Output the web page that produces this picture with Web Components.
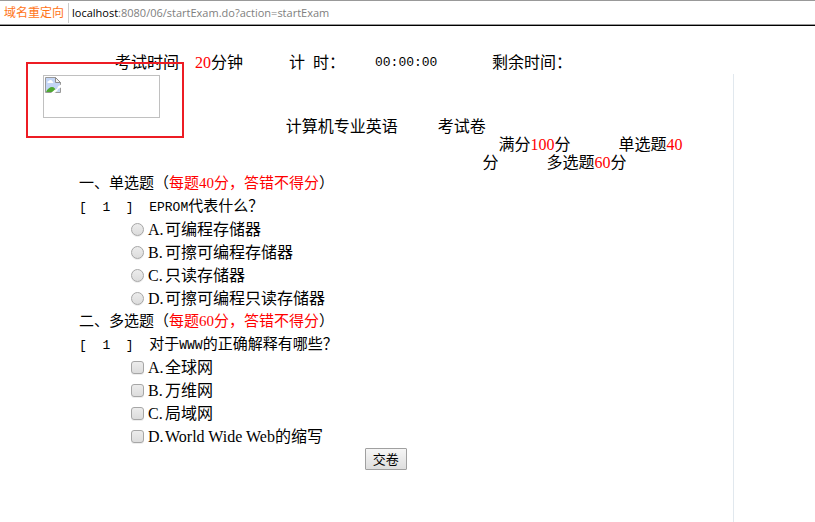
<!DOCTYPE html>
<html lang="zh-CN">
<head>
  <meta charset="utf-8">
  <meta name="viewport" content="width=device-width, initial-scale=1">
  <title>计算机专业英语 考试卷</title>
  <style>
    body {
      margin: 0;
      background: #fff;
      color: #000;
      font: 16px/18px "Liberation Serif", "Noto Sans CJK SC", serif;
      --red: #f00;
      --mono: "Liberation Mono", "Noto Sans CJK SC", monospace;
    }
  </style>
</head>
<body>
  <exam-page>
    <address-bar slot="bar" label="域名重定向" host="localhost" path=":8080/06/startExam.do?action=startExam"></address-bar>
    <exam-timer slot="timer" minutes="20" elapsed="00:00:00"></exam-timer>
    <exam-logo></exam-logo>
    <exam-header subject="计算机专业英语" total="100" single="40" multiple="60"></exam-header>
    <exam-form>
      <exam-section heading="一、单选题" note="每题40分，答错不得分">
        <exam-question number="1" type="radio" options="可编程存储器|可擦可编程存储器|只读存储器|可擦可编程只读存储器"><code>EPROM</code>代表什么？</exam-question>
      </exam-section>
      <exam-section heading="二、多选题" note="每题60分，答错不得分">
        <exam-question number="1" type="checkbox" options="全球网|万维网|局域网|World Wide Web的缩写">对于<code>WWW</code>的正确解释有哪些？</exam-question>
      </exam-section>
    </exam-form>
  </exam-page>

  <script>
    class ExamPage extends HTMLElement {
      constructor() {
        super();
        this.attachShadow({ mode: 'open' });
        this.shadowRoot.innerHTML = `
          <style>
            :host {
              display: flex;
              flex-direction: column;
              min-height: 100vh;
            }
            main {
              flex: 1;
              box-sizing: border-box;
              margin: 2px 10% 0 0;
              padding-top: 1px;
              border-right: 1px solid #e1e8ee;
            }
          </style>
          <slot name="bar"></slot>
          <slot name="timer"></slot>
          <main><slot></slot></main>
        `;
      }
    }

    class AddressBar extends HTMLElement {
      constructor() {
        super();
        this.attachShadow({ mode: 'open' });
        this.shadowRoot.innerHTML = `
          <style>
            :host {
              display: flex;
              align-items: center;
              height: 23px;
              border-top: 1px solid #999;
              border-bottom: 1px solid #999;
              box-shadow: 0 1px 0 #000;
              font: 12px/20px "Open Sans", "Noto Sans CJK SC", sans-serif;
              white-space: nowrap;
            }
            .label {
              padding: 0 4px;
              border-right: 1px solid #ccc;
              color: #ff7519;
            }
            .url {
              padding-left: 3px;
              font-size: 11px;
              color: #808080;
            }
            b {
              font-weight: normal;
              color: #000;
            }
          </style>
          <span class="label">${this.getAttribute('label')}</span>
          <span class="url"><b>${this.getAttribute('host')}</b>${this.getAttribute('path')}</span>
        `;
      }
    }

    class ExamTimer extends HTMLElement {
      constructor() {
        super();
        this.attachShadow({ mode: 'open' });
        this.shadowRoot.innerHTML = `
          <style>
            :host {
              display: grid;
              grid-template-columns: 174px 86px 117px auto;
              padding: 29px 0 0 115px;
              white-space: nowrap;
            }
            .red {
              margin-left: 16px;
              color: var(--red);
            }
            time {
              font-family: var(--mono);
              font-size: 13px;
            }
          </style>
          <span>考试时间<span class="red">${this.getAttribute('minutes')}</span>分钟</span>
          <span>计&ensp;时：</span>
          <time>${this.getAttribute('elapsed')}</time>
          <span>剩余时间：</span>
        `;
      }
    }

    class ExamLogo extends HTMLElement {
      constructor() {
        super();
        this.attachShadow({ mode: 'open' });
        this.shadowRoot.innerHTML = `
          <style>
            :host {
              display: block;
              position: relative;
              box-sizing: border-box;
              width: 117px;
              height: 43px;
              margin-left: 43px;
              padding: 1px;
              border: 1px solid #c0c0c0;
            }
            /* highlight frame drawn over the logo and the timer row */
            :host::after {
              content: "";
              position: absolute;
              inset: -14px -25px -21px -18px;
              border: 2px solid #ed1c24;
            }
            svg {
              display: block;
            }
          </style>
          <svg width="16" height="16" viewBox="0 0 16 16" aria-hidden="true">
            <path d="M.5.5h10l5 5v10H.5z" fill="#fff"/>
            <path d="M1 1h10v5h4v9H1z" fill="#c3d5f5"/>
            <path d="M2.500 6a1.500 1.500 0 0 1 1.300-2 2 2 0 0 1 3.700.5A1.300 1.300 0 0 1 8.300 6z" fill="#fff"/>
            <path d="M1 15c1-3 4-5 6-5s4 2 5 5z" fill="#4fa832"/>
            <path d="M.5 15.500V.5h10l5 5v10z" fill="none" stroke="#999"/>
            <path d="M10.500.5v5h5z" fill="#f2f2f2" stroke="#8c8c8c"/>
            <path d="M6 16l4-3.500 2-.5 1-2.500 3-2v3l-3 1.500-1 2.500L9.500 16z" fill="#fff"/>
          </svg>
        `;
      }
    }

    class ExamHeader extends HTMLElement {
      constructor() {
        super();
        this.attachShadow({ mode: 'open' });
        this.shadowRoot.innerHTML = `
          <style>
            :host {
              display: block;
              padding: 0 40px 0 79px;
            }
            h1 {
              display: flex;
              justify-content: center;
              gap: 40px;
              margin: 0;
              font: inherit;
            }
            p {
              width: 210px;
              margin: 0 0 0 auto;
              text-indent: 16px;
            }
            .red {
              color: var(--red);
            }
          </style>
          <h1><span>${this.getAttribute('subject')}</span><span>考试卷</span></h1>
          <p>满分<span class="red">${this.getAttribute('total')}</span>分&emsp;&emsp;&emsp;单选题<span class="red">${this.getAttribute('single')}</span>分&emsp;&emsp;&emsp;多选题<span class="red">${this.getAttribute('multiple')}</span>分</p>
        `;
      }
    }

    class ExamForm extends HTMLElement {
      constructor() {
        super();
        this.attachShadow({ mode: 'open' });
        this.shadowRoot.innerHTML = `
          <style>
            :host {
              display: block;
              padding: 0 40px 0 79px;
            }
            button {
              display: block;
              margin: 0 auto;
              padding: 0 7px;
              height: 22px;
              border: 1px solid #a0a0a0;
              border-radius: 1px;
              background: linear-gradient(#f6f6f6, #dedede);
              color: #000;
              font: 13px/20px "Noto Sans CJK SC", sans-serif;
            }
          </style>
          <form>
            <slot></slot>
            <button type="button">交卷</button>
          </form>
        `;
      }
    }

    class ExamSection extends HTMLElement {
      constructor() {
        super();
        this.attachShadow({ mode: 'open' });
        this.shadowRoot.innerHTML = `
          <style>
            :host {
              display: block;
            }
            h2 {
              margin: 0;
              font: inherit;
              font-size: 15px;
              line-height: 23px;
            }
            .red {
              color: var(--red);
            }
          </style>
          <h2>${this.getAttribute('heading')}（<span class="red">${this.getAttribute('note')}</span>）</h2>
          <slot></slot>
        `;
      }
    }

    class ExamQuestion extends HTMLElement {
      constructor() {
        super();
        this.attachShadow({ mode: 'open' });
        const type = this.getAttribute('type');
        const options = this.getAttribute('options').split('|').map((text, i) => {
          const letter = 'ABCD'[i];
          return `
            <label>
              <input type="${type}" name="answer" value="${letter}">
              <span><span class="letter">${letter}.</span>${text}</span>
            </label>`;
        }).join('');

        this.shadowRoot.innerHTML = `
          <style>
            :host {
              display: block;
              line-height: 23px;
            }
            p {
              margin: 0;
              font-size: 15px;
            }
            .number, ::slotted(code) {
              font-family: var(--mono);
              font-size: 13px;
              line-height: 1;
            }
            label {
              display: flex;
              align-items: center;
              gap: 4px;
              padding-left: 52px;
            }
            .letter {
              display: inline-block;
              width: 17px;
            }
            input {
              appearance: none;
              box-sizing: border-box;
              width: 13px;
              height: 13px;
              margin: 0;
              border: 1px solid #a6a6a6;
              border-radius: 3px;
              background: linear-gradient(#ececec, #dcdcdc);
              box-shadow: 0 1px 0 #eee;
            }
            input[type="radio"] {
              border-radius: 50%;
            }
            input:checked {
              background: #555;
            }
          </style>
          <p><span class="number">[&nbsp;&nbsp;${this.getAttribute('number')}&nbsp;&nbsp;]&nbsp;&nbsp;</span><slot></slot></p>
          ${options}
        `;
      }
    }

    customElements.define('exam-page', ExamPage);
    customElements.define('address-bar', AddressBar);
    customElements.define('exam-timer', ExamTimer);
    customElements.define('exam-logo', ExamLogo);
    customElements.define('exam-header', ExamHeader);
    customElements.define('exam-form', ExamForm);
    customElements.define('exam-section', ExamSection);
    customElements.define('exam-question', ExamQuestion);
  </script>
</body>
</html>
